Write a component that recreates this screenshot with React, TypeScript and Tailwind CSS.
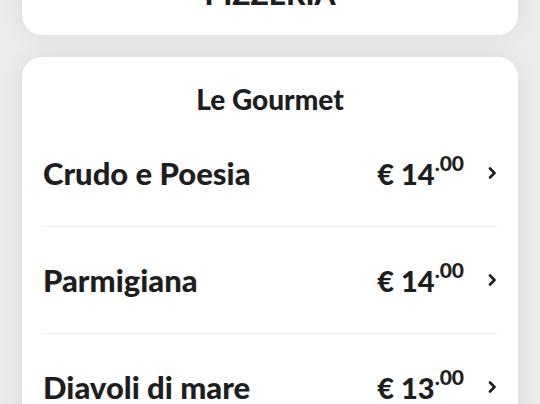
type Dish = { name: string; euros: number; cents: string }

const DISHES: Dish[] = [
  { name: 'Crudo e Poesia', euros: 14, cents: '00' },
  { name: 'Parmigiana', euros: 14, cents: '00' },
  { name: 'Diavoli di mare', euros: 13, cents: '00' },
]

function Chevron() {
  return (
    <svg className="ml-[24px] h-[12px] w-[9px]" viewBox="0 0 9 12" fill="none" aria-hidden="true">
      <path d="M2 1.5l4.5 4.5L2 10.5" stroke="currentColor" strokeWidth={2.6} strokeLinecap="round" strokeLinejoin="round" />
    </svg>
  )
}

function DishRow({ dish }: { dish: Dish }) {
  return (
    <div className="flex h-[107px] items-center border-b border-[#eeeeee]">
      <span className="flex-1 text-[31px] font-black leading-none">{dish.name}</span>
      <span className="flex items-baseline font-black leading-none">
        <span className="text-[29px]">€ {dish.euros}</span>
        <span className="relative -top-[14px] text-[21px]">.{dish.cents}</span>
      </span>
      <Chevron />
    </div>
  )
}

export default function App() {
  return (
    <div
      className="h-[404px] overflow-hidden bg-[#ebebeb] px-[22px] text-[#1e1e1e]"
      style={{ fontFamily: 'Lato, "Noto Sans", sans-serif' }}
    >
      {/* restaurant header card, scrolled mostly out of view */}
      <div className="-mt-[25px] rounded-b-[20px] bg-white pb-[24px] text-center shadow-[0_0_24px_rgba(0,0,0,0.07)]">
        <h1 className="text-[30px] font-black leading-[36px]">PIZZERIA</h1>
      </div>

      {/* menu section */}
      <div className="mt-[22px] rounded-[20px] bg-white px-[21px] shadow-[0_0_24px_rgba(0,0,0,0.07)]">
        <h2 className="pt-[24px] pb-[3px] text-center text-[28px] font-black leading-[36px]">Le Gourmet</h2>
        {DISHES.map((dish) => (
          <DishRow key={dish.name} dish={dish} />
        ))}
      </div>
    </div>
  )
}
